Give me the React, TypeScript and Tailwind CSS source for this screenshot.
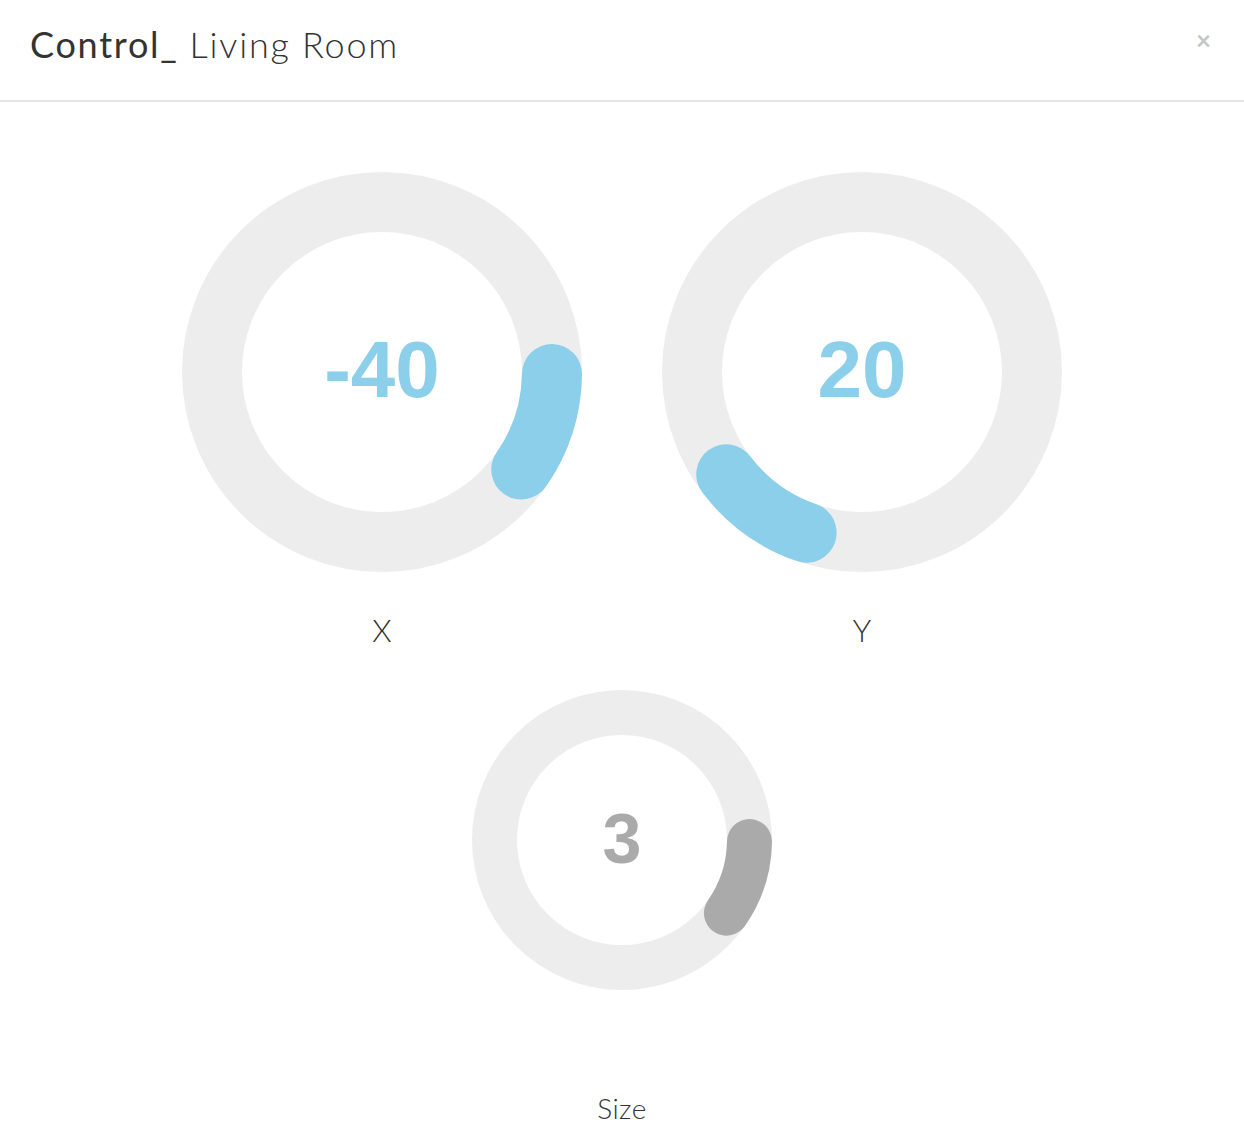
import React from "react";

function arcPath(cx: number, cy: number, r: number, a1: number, a2: number) {
  const t1 = (a1 * Math.PI) / 180;
  const t2 = (a2 * Math.PI) / 180;
  const x1 = cx + r * Math.cos(t1);
  const y1 = cy + r * Math.sin(t1);
  const x2 = cx + r * Math.cos(t2);
  const y2 = cy + r * Math.sin(t2);
  const large = Math.abs(a2 - a1) > 180 ? 1 : 0;
  const sweep = a2 > a1 ? 1 : 0;
  return `M ${x1} ${y1} A ${r} ${r} 0 ${large} ${sweep} ${x2} ${y2}`;
}

function Knob({
  size,
  stroke,
  a1,
  a2,
  color,
  value,
  textClass,
}: {
  size: number;
  stroke: number;
  a1: number;
  a2: number;
  color: string;
  value: string;
  textClass: string;
}) {
  const c = size / 2;
  const r = (size - stroke) / 2;
  return (
    <div className="relative" style={{ width: size, height: size }}>
      <svg width={size} height={size} viewBox={`0 0 ${size} ${size}`} className="block">
        <circle cx={c} cy={c} r={r} fill="none" stroke="#ededed" strokeWidth={stroke} />
        <path d={arcPath(c, c, r, a1, a2)} fill="none" stroke={color} strokeWidth={stroke} strokeLinecap="round" />
      </svg>
      <div className="absolute inset-0 flex items-center justify-center">
        <span className={textClass} style={{ fontFamily: '"Liberation Sans", Arial, sans-serif' }}>
          {value}
        </span>
      </div>
    </div>
  );
}

export default function App() {
  return (
    <div className="w-[1244px] min-h-[1144px] bg-white text-[#333]" style={{ fontFamily: 'Lato, "Open Sans", sans-serif' }}>
      <div className="h-[102px] border-b-2 border-[#e5e5e5] flex items-start justify-between pl-[30px] pr-[33px]">
        <h1 className="mt-[21px] text-[36px] leading-[46px] tracking-[1.75px] text-[#333]">
          <span className="font-normal">Control_</span> <span className="font-light">Living Room</span>
        </h1>
        <button className="mt-[27px] text-[26px] leading-[26px] text-[#c4c4c4] font-bold">×</button>
      </div>
      <div className="flex flex-col items-center">
        <div className="flex gap-[80px] mt-[70px]">
          <div className="flex flex-col items-center">
            <Knob size={400} stroke={60} a1={0.7} a2={35} color="#8bcfeb" value="-40" textClass="text-[80px] font-bold text-[#8bcfeb] leading-none -mt-[4px]" />
            <div className="mt-[38px] text-[31px] font-light leading-[40px]">X</div>
          </div>
          <div className="flex flex-col items-center">
            <Knob size={400} stroke={60} a1={109} a2={143} color="#8bcfeb" value="20" textClass="text-[80px] font-bold text-[#8bcfeb] leading-none -mt-[4px]" />
            <div className="mt-[38px] text-[31px] font-light leading-[40px]">Y</div>
          </div>
        </div>
        <div className="flex flex-col items-center mt-[40px]">
          <Knob size={300} stroke={45} a1={0.7} a2={35} color="#aaaaaa" value="3" textClass="text-[70px] font-bold text-[#aaaaaa] leading-none -mt-[2px]" />
          <div className="mt-[101px] text-[28px] tracking-[0.5px] font-light leading-[34px]">Size</div>
        </div>
      </div>
    </div>
  );
}
